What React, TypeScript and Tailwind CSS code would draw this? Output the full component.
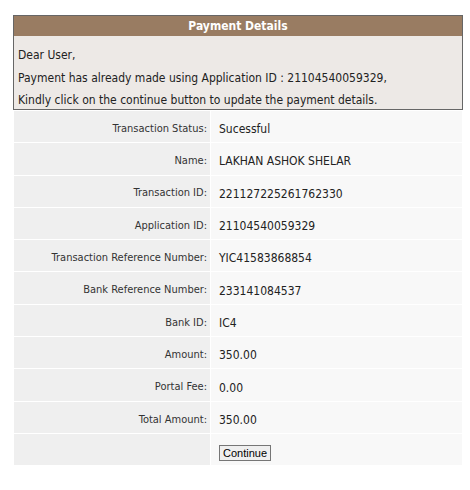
import React from 'react';

const rows: [string, string][] = [
  ['Transaction Status:', 'Sucessful'],
  ['Name:', 'LAKHAN ASHOK SHELAR'],
  ['Transaction ID:', '221127225261762330'],
  ['Application ID:', '21104540059329'],
  ['Transaction Reference Number:', 'YIC41583868854'],
  ['Bank Reference Number:', '233141084537'],
  ['Bank ID:', 'IC4'],
  ['Amount:', '350.00'],
  ['Portal Fee:', '0.00'],
  ['Total Amount:', '350.00']
];

const App = () => {
  return <div className="w-[470px] h-[490px] bg-white pt-[15px] pl-[13px]" style={{ fontFamily: "'DejaVu Sans Condensed', 'Liberation Sans', sans-serif" }}>
      <div className="w-[450px] border border-[#666666]">
        <div className="h-[20px] bg-[#997c62] text-white text-[12px] font-bold text-center leading-[20px]">
          Payment Details
        </div>
        <div className="h-[73px] bg-[#ede9e6] pl-[4px] pt-[8px] text-[12px] leading-[22.5px] text-[#222]">
          <p>Dear User,</p>
          <p>Payment has already made using Application ID : 21104540059329,</p>
          <p className="h-[13px]">Kindly click on the continue button to update the payment details.</p>
        </div>
      </div>
      <div className="ml-[1px] mt-[1px] w-[448px] grid grid-cols-[196px_1fr] gap-[1px] bg-white">
        {rows.map(([label, value]) => <React.Fragment key={label}>
            <div className="h-[31.3px] bg-[#efefef] flex items-center justify-end pr-[3px] pt-[5px] text-[11px] text-[#333]">
              {label}
            </div>
            <div className="h-[31.3px] bg-[#f8f8f8] flex items-center pl-[8px] pt-[5px] text-[12px] text-[#222]">
              {value}
            </div>
          </React.Fragment>)}
        <div className="h-[31px] bg-[#efefef]"></div>
        <div className="h-[31px] bg-[#f8f8f8] flex items-center pl-[8px] pt-[7px]">
          <button className="border border-[#767676] bg-[#efefef] px-[3px] h-[16px] text-[11px] leading-[14px] text-black" style={{ fontFamily: "'Liberation Sans', Arial, sans-serif" }}>
            Continue
          </button>
        </div>
      </div>
    </div>;
};

export default App;
